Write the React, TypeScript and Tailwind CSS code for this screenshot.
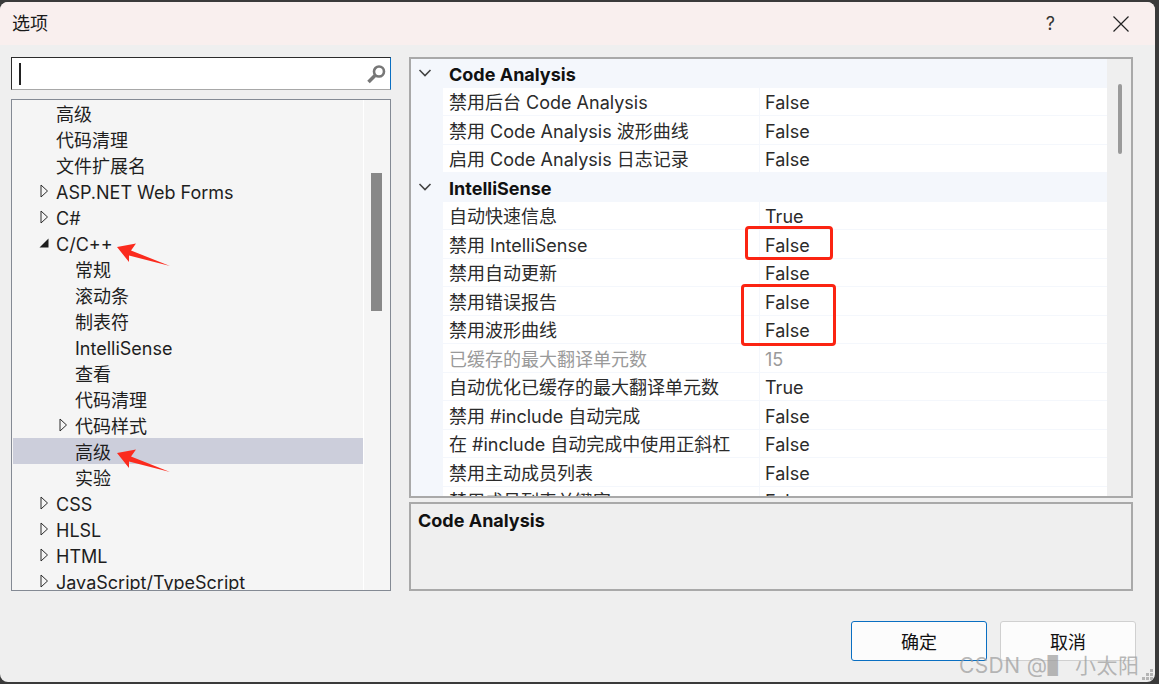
const fontStack = { fontFamily: 'Inter, "Noto Sans CJK SC", sans-serif' };

type TreeRow = { label: string; level: 1 | 2; state?: 'closed' | 'open'; selected?: boolean };

const treeRows: TreeRow[] = [
  { label: '高级', level: 1 },
  { label: '代码清理', level: 1 },
  { label: '文件扩展名', level: 1 },
  { label: 'ASP.NET Web Forms', level: 1, state: 'closed' },
  { label: 'C#', level: 1, state: 'closed' },
  { label: 'C/C++', level: 1, state: 'open' },
  { label: '常规', level: 2 },
  { label: '滚动条', level: 2 },
  { label: '制表符', level: 2 },
  { label: 'IntelliSense', level: 2 },
  { label: '查看', level: 2 },
  { label: '代码清理', level: 2 },
  { label: '代码样式', level: 2, state: 'closed' },
  { label: '高级', level: 2, selected: true },
  { label: '实验', level: 2 },
  { label: 'CSS', level: 1, state: 'closed' },
  { label: 'HLSL', level: 1, state: 'closed' },
  { label: 'HTML', level: 1, state: 'closed' },
  { label: 'JavaScript/TypeScript', level: 1, state: 'closed' },
];

type PropRow = { name: string; value?: string; group?: boolean; muted?: boolean };

const propRows: PropRow[] = [
  { name: 'Code Analysis', group: true },
  { name: '禁用后台 Code Analysis', value: 'False' },
  { name: '禁用 Code Analysis 波形曲线', value: 'False' },
  { name: '启用 Code Analysis 日志记录', value: 'False' },
  { name: 'IntelliSense', group: true },
  { name: '自动快速信息', value: 'True' },
  { name: '禁用 IntelliSense', value: 'False' },
  { name: '禁用自动更新', value: 'False' },
  { name: '禁用错误报告', value: 'False' },
  { name: '禁用波形曲线', value: 'False' },
  { name: '已缓存的最大翻译单元数', value: '15', muted: true },
  { name: '自动优化已缓存的最大翻译单元数', value: 'True' },
  { name: '禁用 #include 自动完成', value: 'False' },
  { name: '在 #include 自动完成中使用正斜杠', value: 'False' },
  { name: '禁用主动成员列表', value: 'False' },
  { name: '禁用成员列表关键字', value: 'False' },
];

function Expander({ state }: { state?: 'closed' | 'open' }) {
  if (state === 'open') {
    return (
      <svg width="10" height="10" viewBox="0 0 10 10" className="shrink-0">
        <polygon points="9.5,0.5 9.5,9.5 0.5,9.5" fill="#1e1e1e" />
      </svg>
    );
  }
  if (state === 'closed') {
    return (
      <svg width="10" height="14" viewBox="0 0 10 14" className="shrink-0">
        <polygon points="2,1 8.5,7 2,13" fill="none" stroke="#2a2a2a" strokeWidth="1" />
      </svg>
    );
  }
  return <span className="w-[10px] shrink-0" />;
}

function TreeItem({ row }: { row: TreeRow }) {
  return (
    <div className={`flex h-[26px] shrink-0 items-center gap-[7px] text-[18px] leading-[26px] text-[#1e1e1e] ${row.level === 1 ? 'pl-[26px]' : 'pl-[45px]'} ${row.selected ? 'bg-[#cccedb]' : ''}`}>
      <Expander state={row.state} />
      <span className="whitespace-nowrap pt-[3px]">{row.label}</span>
    </div>
  );
}

function GridRow({ row }: { row: PropRow }) {
  if (row.group) {
    return (
      <div className="flex h-[28.5px] shrink-0 items-center bg-[#f4f7fc]">
        <div className="flex w-[28px] shrink-0 justify-center">
          <svg width="14" height="8" viewBox="0 0 14 8">
            <path d="M1.5 1 L7 6.5 L12.5 1" fill="none" stroke="#444" strokeWidth="1.6" />
          </svg>
        </div>
        <span className="pl-[10px] pt-[3px] text-[18px] font-bold text-[#111]">{row.name}</span>
      </div>
    );
  }
  const tone = row.muted ? 'text-[#9a9a9a]' : 'text-[#2b2b2b]';
  return (
    <div className={`flex h-[28.5px] shrink-0 items-center bg-[#f4f7fc] text-[18px] ${tone}`}>
      <div className="w-[32px] shrink-0" />
      <div className="flex h-full w-[316px] shrink-0 items-center border-b border-[#f4f7fc] bg-white pl-[6px] pt-[3px]">
        <span className="whitespace-nowrap">{row.name}</span>
      </div>
      <div className="flex h-full flex-1 items-center border-b border-l border-[#f4f7fc] bg-white pl-[5px] pt-[3px]">
        {row.value}
      </div>
    </div>
  );
}

function RedArrow({ className }: { className: string }) {
  return (
    <svg width="56" height="24" viewBox="0 0 56 24" className={`absolute ${className}`}>
      <polygon points="1,4 20,0.5 15,7.5 54,23 13,12.5 13,19" fill="#fb2b1e" />
    </svg>
  );
}

export default function App() {
  return (
    <div style={fontStack} className="relative h-[684px] w-[1159px] overflow-hidden bg-[#3a3a3a] pb-[2px] pr-[4px] pt-[2px]">
      <div className="flex h-full flex-col overflow-hidden rounded-[8px] bg-[#efefef]">
        <div className="flex h-[43px] shrink-0 items-center bg-[#f9efee] pl-[12px] pr-[26px]">
          <span className="text-[18px] text-[#1a1a1a]">选项</span>
          <span className="ml-auto text-[18px] text-[#333]">?</span>
          <svg width="16" height="16" viewBox="0 0 16 16" className="ml-[58px]">
            <path d="M0.5 0.5 L15.5 15.5 M15.5 0.5 L0.5 15.5" stroke="#222" strokeWidth="1.2" />
          </svg>
        </div>

        <div className="flex gap-[18px] pl-[11px] pt-[12px]">
          <div className="flex w-[380px] shrink-0 flex-col gap-[9px]">
            <div className="flex h-[33px] items-center border border-[#2b2b2b] border-b-[#a8a8a8] border-r-[#0a6fc2] bg-white pl-[7px] pr-[3px]">
              <span className="h-[22px] w-[2px] bg-[#222]" />
              <svg width="21" height="20" viewBox="0 0 21 20" className="ml-auto">
                <circle cx="13" cy="7.5" r="5" fill="none" stroke="#777" strokeWidth="2.6" />
                <path d="M9 11.5 L2.5 18" stroke="#777" strokeWidth="3.6" />
              </svg>
            </div>
            <div className="flex h-[492px] overflow-hidden border border-[#848a94] bg-[#f5f5f5]">
              <div className="flex w-[352px] shrink-0 flex-col overflow-hidden border-r border-white pl-px">
                {treeRows.map((row, i) => (
                  <TreeItem key={i} row={row} />
                ))}
              </div>
              <div className="flex-1 pl-[7px] pt-[73px]">
                <div className="h-[138px] w-[11px] bg-[#888888]" />
              </div>
            </div>
          </div>

          <div className="flex w-[724px] shrink-0 flex-col gap-[4px]">
            <div className="flex h-[441px] overflow-hidden border-2 border-[#a9a9a9] bg-[#efefef]">
              <div className="flex w-[696px] shrink-0 flex-col overflow-hidden">
                {propRows.map((row, i) => (
                  <GridRow key={i} row={row} />
                ))}
              </div>
              <div className="flex-1 pl-[11px] pt-[25px]">
                <div className="h-[70px] w-[4px] rounded-sm bg-[#9a9a9a]" />
              </div>
            </div>
            <div className="h-[89px] border-2 border-[#a9a9a9] px-[7px] pt-[3px] text-[18px] font-bold text-[#111]">
              Code Analysis
            </div>
          </div>
        </div>

        <div className="mt-[30px] flex justify-end gap-[13px] pr-[19px]">
          <button className="h-[40px] w-[136px] rounded-[3px] border border-[#0a6fc2] bg-[#fcfcfc] pt-[2px] text-[18px] text-[#111]">确定</button>
          <button className="h-[40px] w-[136px] rounded-[3px] border border-[#d0d0d0] bg-[#fcfcfc] pt-[2px] text-[18px] text-[#111]">取消</button>
        </div>
      </div>

      <RedArrow className="left-[116px] top-[243px]" />
      <RedArrow className="left-[116px] top-[449px]" />
      <div className="absolute left-[745px] top-[226px] h-[34px] w-[88px] rounded-[4px] border-[3px] border-[#fb2412]" />
      <div className="absolute left-[741px] top-[284px] h-[62px] w-[95px] rounded-[4px] border-[3px] border-[#fb2412]" />

      <div className="absolute left-[959px] top-[650px] whitespace-nowrap text-[21px] tracking-[0.4px] text-[#9a9a9a]/70">CSDN @▌ 小太阳</div>
      <svg width="12" height="12" viewBox="0 0 12 12" className="absolute left-[1142px] top-[668px]">
        <path d="M8 1h3v3H8zM4 5h3v3H4zM8 5h3v3H8zM0 9h3v3H0zM4 9h3v3H4zM8 9h3v3H8z" fill="#b5b5b5" />
      </svg>
    </div>
  );
}
